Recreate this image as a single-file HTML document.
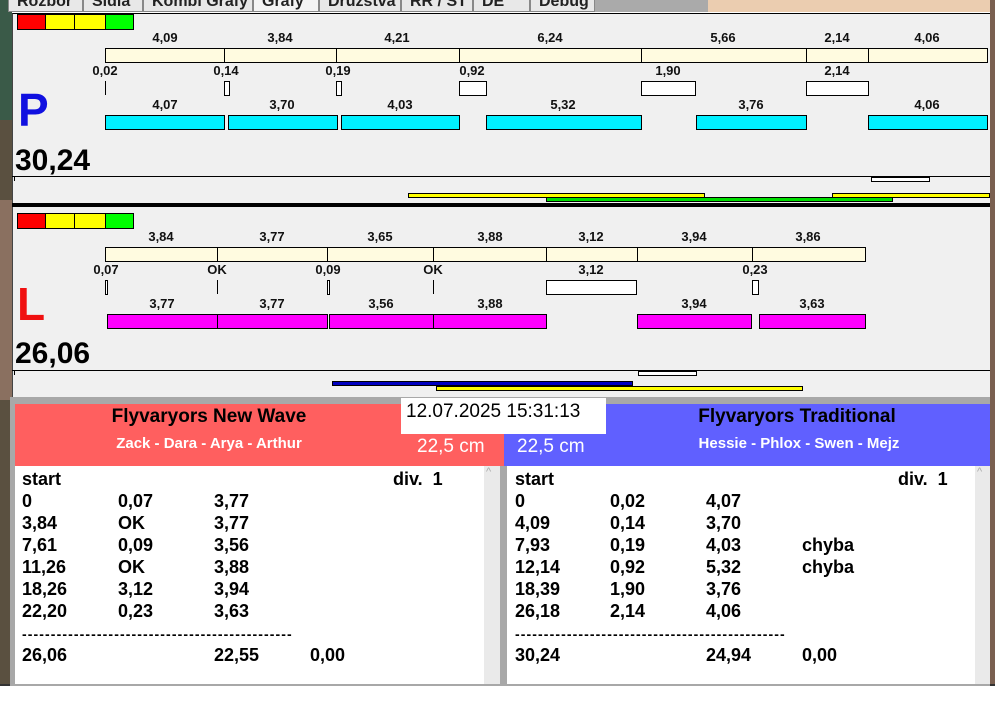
<!DOCTYPE html>
<html><head><meta charset="utf-8"><style>
*{margin:0;padding:0;box-sizing:border-box}
body{width:995px;height:701px;overflow:hidden;background:#fff;position:relative;font-family:"Liberation Sans",Arial,sans-serif}
div{position:absolute}
.b{border:1px solid #000}
.t{font-weight:bold;font-size:13px;transform:translateX(-50%);white-space:nowrap;line-height:14px;color:#111}
.be{background:#fffbe0;border:1px solid #000;height:15px}
.cy{background:#00f0ff;border:1px solid #000;height:15px}
.mg{background:#ff00ff;border:1px solid #000;height:15px}
.wb{background:#fff;border:1px solid #000;height:15px}
.vl{width:1px;background:#000;height:14px}
.r{font-weight:bold;font-size:18px;line-height:22px;color:#000;white-space:nowrap}
.tab{top:-8px;height:20px;background:#e8e8e8;border:1px solid #888;font-weight:bold;font-size:16px;color:#222;padding:0 8px;white-space:nowrap;line-height:18px}
</style></head><body>
<!-- desktop edges -->
<div style="left:0;top:0;width:12px;height:701px;background:#5a5040"></div>
<div style="left:0;top:0;width:12px;height:120px;background:#3a5a48"></div>
<div style="left:0;top:200px;width:12px;height:200px;background:#8a7060"></div>
<div style="left:990px;top:0;width:5px;height:701px;background:#7a6050"></div>
<div style="left:0;top:686px;width:995px;height:15px;background:#fff"></div>
<div style="left:0;top:684px;width:995px;height:2px;background:#333"></div>
<!-- tab bar -->
<div style="left:12px;top:0;width:583px;height:12px;background:#e8e8e8;border-bottom:1px solid #999"></div>
<div style="left:595px;top:0;width:113px;height:12px;background:#aaa"></div>
<div style="left:708px;top:0;width:282px;height:12px;background:#ebcdb0"></div>
<div class="tab" style="left:8px;width:75px">Rozbor</div>
<div class="tab" style="left:83px;width:60px">Sidla</div>
<div class="tab" style="left:143px;width:110px">Kombi Grafy</div>
<div class="tab" style="left:253px;width:66px;background:#f4f4f4">Grafy</div>
<div class="tab" style="left:319px;width:82px">Družstva</div>
<div class="tab" style="left:401px;width:72px">RR / ST</div>
<div class="tab" style="left:473px;width:57px">DE</div>
<div class="tab" style="left:530px;width:65px">Debug</div>
<!-- main panel -->
<div style="left:12px;top:13px;width:978px;height:385px;background:#f0f0f0;border-top:1px solid #000;border-left:1px solid #444"></div>

<!-- P panel -->
<div class="b" style="left:17px;top:14px;width:29px;height:16px;background:#f00"></div>
<div class="b" style="left:45px;top:14px;width:30px;height:16px;background:#ff0"></div>
<div class="b" style="left:74px;top:14px;width:32px;height:16px;background:#ff0"></div>
<div class="b" style="left:105px;top:14px;width:29px;height:16px;background:#0f0"></div>

<div class="t" style="left:165px;top:31px">4,09</div><div class="t" style="left:280px;top:31px">3,84</div><div class="t" style="left:397px;top:31px">4,21</div><div class="t" style="left:550px;top:31px">6,24</div><div class="t" style="left:723px;top:31px">5,66</div><div class="t" style="left:837px;top:31px">2,14</div><div class="t" style="left:927px;top:31px">4,06</div>
<div class="be" style="left:105px;top:48px;width:120px"></div><div class="be" style="left:224px;top:48px;width:113px"></div><div class="be" style="left:336px;top:48px;width:124px"></div><div class="be" style="left:459px;top:48px;width:183px"></div><div class="be" style="left:641px;top:48px;width:166px"></div><div class="be" style="left:806px;top:48px;width:63px"></div><div class="be" style="left:868px;top:48px;width:120px"></div>
<div class="t" style="left:105px;top:64px">0,02</div><div class="t" style="left:226px;top:64px">0,14</div><div class="t" style="left:338px;top:64px">0,19</div><div class="t" style="left:472px;top:64px">0,92</div><div class="t" style="left:668px;top:64px">1,90</div><div class="t" style="left:837px;top:64px">2,14</div>
<div class="vl" style="left:105px;top:81px"></div>
<div class="wb" style="left:224px;top:81px;width:6px"></div><div class="wb" style="left:336px;top:81px;width:6px"></div><div class="wb" style="left:459px;top:81px;width:28px"></div><div class="wb" style="left:641px;top:81px;width:55px"></div><div class="wb" style="left:806px;top:81px;width:63px"></div>
<div style="left:18px;top:84px;font-size:46px;font-weight:bold;color:#1010e0;line-height:52px">P</div>
<div class="t" style="left:165px;top:98px">4,07</div><div class="t" style="left:282px;top:98px">3,70</div><div class="t" style="left:400px;top:98px">4,03</div><div class="t" style="left:563px;top:98px">5,32</div><div class="t" style="left:751px;top:98px">3,76</div><div class="t" style="left:927px;top:98px">4,06</div>
<div class="cy" style="left:105px;top:115px;width:120px"></div><div class="cy" style="left:228px;top:115px;width:110px"></div><div class="cy" style="left:341px;top:115px;width:119px"></div><div class="cy" style="left:486px;top:115px;width:156px"></div><div class="cy" style="left:696px;top:115px;width:111px"></div><div class="cy" style="left:868px;top:115px;width:120px"></div>
<div style="left:15px;top:144px;font-size:30px;font-weight:bold;line-height:34px">30,24</div>
<div style="left:12px;top:176px;width:978px;height:1px;background:#000"></div>
<div style="left:14px;top:177px;width:1px;height:4px;background:#000"></div>
<div class="b" style="left:871px;top:177px;width:59px;height:5px;background:#fff"></div>
<div class="b" style="left:408px;top:193px;width:297px;height:5px;background:#ff0"></div>
<div class="b" style="left:832px;top:193px;width:158px;height:5px;background:#ff0"></div>
<div class="b" style="left:546px;top:197px;width:347px;height:5px;background:#0d0"></div>
<div style="left:12px;top:203px;width:978px;height:4px;background:#000"></div>

<!-- L panel -->
<div class="b" style="left:17px;top:213px;width:29px;height:16px;background:#f00"></div>
<div class="b" style="left:45px;top:213px;width:30px;height:16px;background:#ff0"></div>
<div class="b" style="left:74px;top:213px;width:32px;height:16px;background:#ff0"></div>
<div class="b" style="left:105px;top:213px;width:29px;height:16px;background:#0f0"></div>
<div class="t" style="left:161px;top:230px">3,84</div><div class="t" style="left:272px;top:230px">3,77</div><div class="t" style="left:380px;top:230px">3,65</div><div class="t" style="left:490px;top:230px">3,88</div><div class="t" style="left:591px;top:230px">3,12</div><div class="t" style="left:694px;top:230px">3,94</div><div class="t" style="left:808px;top:230px">3,86</div>
<div class="be" style="left:105px;top:247px;width:113px"></div><div class="be" style="left:217px;top:247px;width:111px"></div><div class="be" style="left:327px;top:247px;width:107px"></div><div class="be" style="left:433px;top:247px;width:114px"></div><div class="be" style="left:546px;top:247px;width:92px"></div><div class="be" style="left:637px;top:247px;width:116px"></div><div class="be" style="left:752px;top:247px;width:114px"></div>
<div class="t" style="left:106px;top:263px">0,07</div><div class="t" style="left:217px;top:263px">OK</div><div class="t" style="left:328px;top:263px">0,09</div><div class="t" style="left:433px;top:263px">OK</div><div class="t" style="left:591px;top:263px">3,12</div><div class="t" style="left:755px;top:263px">0,23</div>
<div class="wb" style="left:105px;top:280px;width:3px"></div><div class="vl" style="left:217px;top:280px"></div><div class="wb" style="left:327px;top:280px;width:3px"></div><div class="vl" style="left:433px;top:280px"></div><div class="wb" style="left:546px;top:280px;width:91px"></div><div class="wb" style="left:752px;top:280px;width:7px"></div>
<div style="left:17px;top:280px;font-size:46px;font-weight:bold;color:#f01010;line-height:48px">L</div>
<div class="t" style="left:162px;top:297px">3,77</div><div class="t" style="left:272px;top:297px">3,77</div><div class="t" style="left:381px;top:297px">3,56</div><div class="t" style="left:490px;top:297px">3,88</div><div class="t" style="left:694px;top:297px">3,94</div><div class="t" style="left:812px;top:297px">3,63</div>
<div class="mg" style="left:107px;top:314px;width:111px"></div><div class="mg" style="left:217px;top:314px;width:111px"></div><div class="mg" style="left:329px;top:314px;width:105px"></div><div class="mg" style="left:433px;top:314px;width:114px"></div><div class="mg" style="left:637px;top:314px;width:115px"></div><div class="mg" style="left:759px;top:314px;width:107px"></div>
<div style="left:15px;top:337px;font-size:30px;font-weight:bold;line-height:34px">26,06</div>
<div style="left:12px;top:370px;width:978px;height:1px;background:#000"></div>
<div style="left:14px;top:371px;width:1px;height:4px;background:#000"></div>
<div class="b" style="left:638px;top:371px;width:59px;height:5px;background:#fff"></div>
<div class="b" style="left:332px;top:381px;width:301px;height:5px;background:#0000c0"></div>
<div class="b" style="left:436px;top:386px;width:367px;height:5px;background:#ff0"></div>

<!-- header section -->
<div style="left:10px;top:397px;width:980px;height:289px;background:#a8a8a8"></div>
<div style="left:15px;top:404px;width:489px;height:62px;background:#ff5f5f"></div>
<div style="left:504px;top:404px;width:486px;height:62px;background:#6060ff"></div>
<div style="left:209px;top:405px;transform:translateX(-50%);font-size:19px;font-weight:bold;white-space:nowrap;line-height:24px">Flyvaryors New Wave</div>
<div style="left:209px;top:435px;transform:translateX(-50%);font-size:15px;font-weight:bold;color:#fff;white-space:nowrap;line-height:18px">Zack - Dara - Arya - Arthur</div>
<div style="left:797px;top:405px;transform:translateX(-50%);font-size:19px;font-weight:bold;white-space:nowrap;line-height:24px">Flyvaryors Traditional</div>
<div style="left:799px;top:435px;transform:translateX(-50%);font-size:15px;font-weight:bold;color:#fff;white-space:nowrap;line-height:18px">Hessie - Phlox - Swen - Mejz</div>
<div style="left:417px;top:436px;font-size:19px;color:#fff;line-height:22px;white-space:nowrap">22,5 cm</div>
<div style="left:517px;top:436px;font-size:19px;color:#fff;line-height:22px;white-space:nowrap">22,5 cm</div>
<div style="left:401px;top:398px;width:205px;height:36px;background:#fff"></div>
<div style="left:406px;top:401px;font-size:19px;color:#000;line-height:22px;white-space:nowrap">12.07.2025 15:31:13</div>

<!-- lists -->
<div style="left:15px;top:466px;width:469px;height:218px;background:#fff"></div>
<div style="left:484px;top:466px;width:16px;height:218px;background:#eaeaea"></div>
<div style="left:507px;top:466px;width:468px;height:218px;background:#fff"></div>
<div style="left:975px;top:466px;width:15px;height:218px;background:#eaeaea"></div>
<div style="left:486px;top:466px;font-size:11px;color:#aaa">^</div>
<div style="left:977px;top:466px;font-size:11px;color:#aaa">^</div>

<div class="r" style="left:22px;top:468px">start</div><div class="r" style="left:393px;top:468px">div.&nbsp; 1</div>
<div class="r" style="left:22px;top:490px">0<br>3,84<br>7,61<br>11,26<br>18,26<br>22,20</div>
<div class="r" style="left:118px;top:490px">0,07<br>OK<br>0,09<br>OK<br>3,12<br>0,23</div>
<div class="r" style="left:214px;top:490px">3,77<br>3,77<br>3,56<br>3,88<br>3,94<br>3,63</div>
<div class="r" style="left:22px;top:623px;font-size:14px;letter-spacing:1.1px">-----------------------------------------------</div>
<div class="r" style="left:22px;top:644px">26,06</div><div class="r" style="left:214px;top:644px">22,55</div><div class="r" style="left:310px;top:644px">0,00</div>

<div class="r" style="left:515px;top:468px">start</div><div class="r" style="left:898px;top:468px">div.&nbsp; 1</div>
<div class="r" style="left:515px;top:490px">0<br>4,09<br>7,93<br>12,14<br>18,39<br>26,18</div>
<div class="r" style="left:610px;top:490px">0,02<br>0,14<br>0,19<br>0,92<br>1,90<br>2,14</div>
<div class="r" style="left:706px;top:490px">4,07<br>3,70<br>4,03<br>5,32<br>3,76<br>4,06</div>
<div class="r" style="left:802px;top:534px">chyba<br>chyba</div>
<div class="r" style="left:515px;top:623px;font-size:14px;letter-spacing:1.1px">-----------------------------------------------</div>
<div class="r" style="left:515px;top:644px">30,24</div><div class="r" style="left:706px;top:644px">24,94</div><div class="r" style="left:802px;top:644px">0,00</div>
</body></html>
